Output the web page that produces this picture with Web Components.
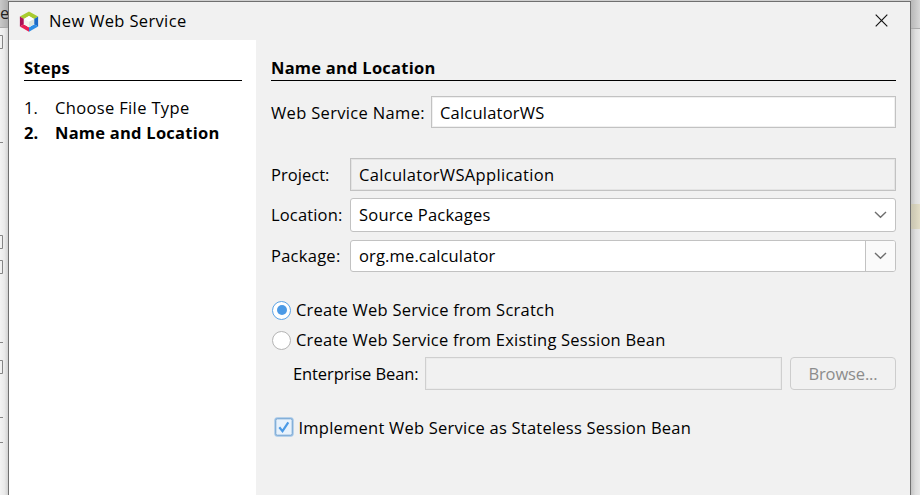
<!DOCTYPE html>
<html lang="en"><head><meta charset="utf-8"><title>New Web Service</title>
<style>html,body{margin:0;height:495px;overflow:hidden;background:#ececec}
body{font:16.5px/24px "Open Sans","Noto Sans",sans-serif;color:#000}</style></head><body>
<wizard-screen></wizard-screen>
<script>
const define=(name,html,setup)=>customElements.define(name,class extends HTMLElement{
  connectedCallback(){
    if(this.shadowRoot)return;
    const t=document.createElement('template');t.innerHTML=html;
    this.attachShadow({mode:'open'}).append(t.content.cloneNode(true));
    if(setup)setup(this,this.shadowRoot);
  }
});
// A single line of text, tracked out to the width in its "w" attribute.
define('text-run','<style>:host{display:inline-block;white-space:pre;flex:none}span{display:inline-block}</style><span><slot></slot></span>',(el)=>{
  const w=parseFloat(el.getAttribute('w'));
  if(!w)return;
  const n=el.textContent.length;
  const s=el.shadowRoot.querySelector('span');
  const natural=s.getBoundingClientRect().width;
  s.style.letterSpacing=((w-natural)/n).toFixed(3)+'px';
});
define('app-logo',`<style>:host{display:block;width:20px;height:21px}svg{display:block}</style>
<svg width="20" height="21" viewBox="0 0 20 21"><path d="M.9 5.5 10 .4l9.100 5.100-4 2.400L10 5 4.900 7.900z" fill="#a8cb30"/><path d="M.9 5.500 4.900 7.900v5.400l-4 2.300z" fill="#ad1057"/><path d="M.9 15.600l4-2.300L10 16.200v4.500z" fill="#e81e56"/><path d="M19.100 5.500l-4 2.400v5.400l4 2.300z" fill="#1b6ac6"/><path d="M19.100 15.600l-4-2.300L10 16.200v4.500z" fill="#2b8de6"/><path d="M4.900 7.900 10 5l5.100 2.900v5.400L10 16.200l-5.100-2.900z" fill="#fff"/><path d="M10 10.800l5.100-2.900v5.400L10 16.200z" fill="#dce5df"/><path d="M4.900 7.900 10 10.800v5.400l-5.100-2.900z" fill="#f2f5f1"/></svg>`);
define('title-bar',`<style>:host{display:flex;height:38px;align-items:flex-start;background:#f1f1f1;padding:0 22px 0 10px;box-sizing:border-box}
app-logo{margin-top:9px}.t{margin:7px 0 0 10px}svg{margin:12px 0 0 auto}</style>
<app-logo></app-logo><div class="t"><slot></slot></div><svg width="13" height="13" viewBox="0 0 13 13"><path d="M.7.7l11.6 11.6M12.3.7.7 12.3" stroke="#111" stroke-width="1.15"/></svg>`);
define('section-heading','<style>:host{display:block;height:41px;box-sizing:border-box;border-bottom:1px solid #000;padding-top:16px;font-weight:700}</style><slot></slot>');
define('step-item','<style>:host{display:grid;grid-template-columns:31px 1fr;height:25px}:host([current]){font-weight:700}</style><text-run><slot name="n"></slot></text-run><slot></slot>');
define('steps-panel',`<style>:host{display:block;width:247px;box-sizing:border-box;background:#fff;padding:0 14px 0 15px}.l{padding-top:15px}</style>
<section-heading><text-run w="46">Steps</text-run></section-heading><div class="l">
<step-item><span slot="n">1.</span><text-run w="134.500">Choose File Type</text-run></step-item>
<step-item current><span slot="n">2.</span><text-run w="164.500">Name and Location</text-run></step-item></div>`);
define('text-field',`<style>:host{display:flex;align-items:center;flex:1;box-sizing:border-box;border:1px solid #c2c2c2;background:#fff;padding-left:8px;align-self:stretch;box-shadow:inset 0 0 0 1px #f0f0f0}
:host([readonly]){background:#f1f1f1;box-shadow:inset 0 0 0 1px #e4e4e4}:host([disabled]){background:#f1f1f1;border-color:#cfcfcf;box-shadow:inset 0 0 0 1px #ebebeb}</style><slot></slot>`);
define('combo-box',`<style>:host{display:flex;align-items:stretch;flex:1;box-sizing:border-box;border:1px solid #c2c2c2;border-radius:3px;background:#fff;padding-left:8px;align-self:stretch;overflow:hidden}
.v{flex:1;display:flex;align-items:center}.b{width:29px;display:flex;align-items:center;justify-content:center}
:host([editable]) .b{border-left:1px solid #c2c2c2;background:#fafafa}</style><div class="v"><slot></slot></div><div class="b"><svg width="13" height="8" viewBox="0 0 13 8"><path d="M1 1l5.5 5.3L12 1" fill="none" stroke="#6e6e6e" stroke-width="1.4"/></svg></div>`);
define('form-row','<style>:host{display:flex;align-items:center}.l{width:var(--label)}</style><div class="l"><slot name="label"></slot></div><slot></slot>');
define('radio-option',`<style>:host{display:flex;align-items:center;height:30px;gap:5px;padding-left:1px}i{width:19px;height:19px;box-sizing:border-box;border:1.5px solid #b4b4b4;border-radius:50%;background:#fff;display:grid;place-items:center}
:host([checked]) i{border-color:#5ba3e6}:host([checked]) i:after{content:"";width:10px;height:10px;border-radius:50%;background:#4b9ae6}</style><i></i><slot></slot>`);
define('check-option',`<style>:host{display:flex;align-items:flex-start;gap:5px;padding-left:2.500px;height:24px}svg{flex:none}</style>
<svg width="20" height="20" viewBox="0 0 20 20"><rect x=".3" y=".3" width="19.4" height="19.4" rx="3" fill="#a3c6e8"/><rect x="1.800" y="1.800" width="16.400" height="16.400" rx="1.500" fill="#e8f2fc" stroke="#70a1cf"/><path d="M5.300 10.200l3.200 3.900 5.800-8.700" fill="none" stroke="#4b9ae6" stroke-width="2.200"/></svg><slot></slot>`);
define('push-button','<style>:host{display:flex;align-items:center;justify-content:center;align-self:stretch;width:106px;box-sizing:border-box;border:1px solid #cdcdcd;border-radius:4px;color:#8c8c8c}</style><slot></slot>');
define('service-form',`<style>:host{display:block;flex:1;background:#f1f1f1;padding:0 14px 0 15px}
.name{height:32px;margin-top:15px;--label:160px}.name text-run{margin-top:2px}.p,.l,.k{--label:79px}.p{height:33px;margin-top:30px}.l{height:34px;margin-top:7px}.k{height:32px;margin-top:8px}
.r{margin-top:23px}.e{height:33px;margin:2px 0 0 22px;--label:132px}push-button{margin-left:8px}check-option{margin-top:27px}check-option text-run{margin-top:-1px}</style>
<section-heading><text-run w="164.500">Name and Location</text-run></section-heading>
<form-row class="name"><text-run slot="label" w="154">Web Service Name:</text-run><text-field><text-run w="104.500">CalculatorWS</text-run></text-field></form-row>
<form-row class="p"><text-run slot="label" w="58.500">Project:</text-run><text-field readonly><text-run w="195.500">CalculatorWSApplication</text-run></text-field></form-row>
<form-row class="l"><text-run slot="label" w="71.500">Location:</text-run><combo-box><text-run w="131.500">Source Packages</text-run></combo-box></form-row>
<form-row class="k"><text-run slot="label" w="69.500">Package:</text-run><combo-box editable><text-run w="136.500">org.me.calculator</text-run></combo-box></form-row>
<div class="r"><radio-option checked><text-run w="258.500">Create Web Service from Scratch</text-run></radio-option>
<radio-option><text-run w="369.500">Create Web Service from Existing Session Bean</text-run></radio-option></div>
<form-row class="e"><text-run slot="label" w="125.500">Enterprise Bean:</text-run><text-field disabled></text-field><push-button><text-run w="69">Browse...</text-run></push-button></form-row>
<check-option><text-run w="392.500">Implement Web Service as Stateless Session Bean</text-run></check-option>`);
define('wizard-dialog',`<style>:host{display:flex;flex-direction:column;width:903px;box-sizing:border-box;border:1px solid #707070;border-bottom:0;margin-top:1px;height:494px;background:#f1f1f1}.b{display:flex;flex:1}</style>
<title-bar><text-run w="137.500">New Web Service</text-run></title-bar><div class="b"><steps-panel></steps-panel><service-form></service-form></div>`);
// Slices of the editor window visible on both sides of the dialog.
define('editor-left',`<style>:host{display:block;width:8px;height:495px;overflow:hidden;background:linear-gradient(90deg,#f3f3f3,#eaeaea 55%,#d2d2d2)}
.tab{height:27px;background:linear-gradient(90deg,#c9c9c9,#adadad);border-bottom:1px solid #aaa;line-height:25px;color:#222}
svg{display:block}</style><div class="tab"><text-run>e</text-run></div><svg width="8" height="467"><path d="M0 7.500h2.500v13H0M0 114.500h3M0 207.500h2.500v13H0M0 232.500h2.500v13H0M0 314.500h3M0 332.500h2.500v13H0M0 389.500h3M0 414.500h3" fill="none" stroke="#858585"/></svg>`);
define('editor-right',`<style>:host{display:flex;flex-direction:column;width:9px;height:495px;background:linear-gradient(90deg,#c4c4c4,#dedede 50%,#e8e8e8)}
.t{height:28px;border-bottom:1px solid #aaa;background:linear-gradient(90deg,#b8b8b8,#d8d8d8)}.m{margin-top:175px;height:25px;background:linear-gradient(90deg,#c8c4b0,#e2ddc6)}</style><div class="t"></div><div class="m"></div>`);
define('wizard-screen',`<style>:host{display:flex;width:920px;height:495px;background:#d0d0d0}</style><editor-left></editor-left><wizard-dialog></wizard-dialog><editor-right></editor-right>`);
</script></body></html>
